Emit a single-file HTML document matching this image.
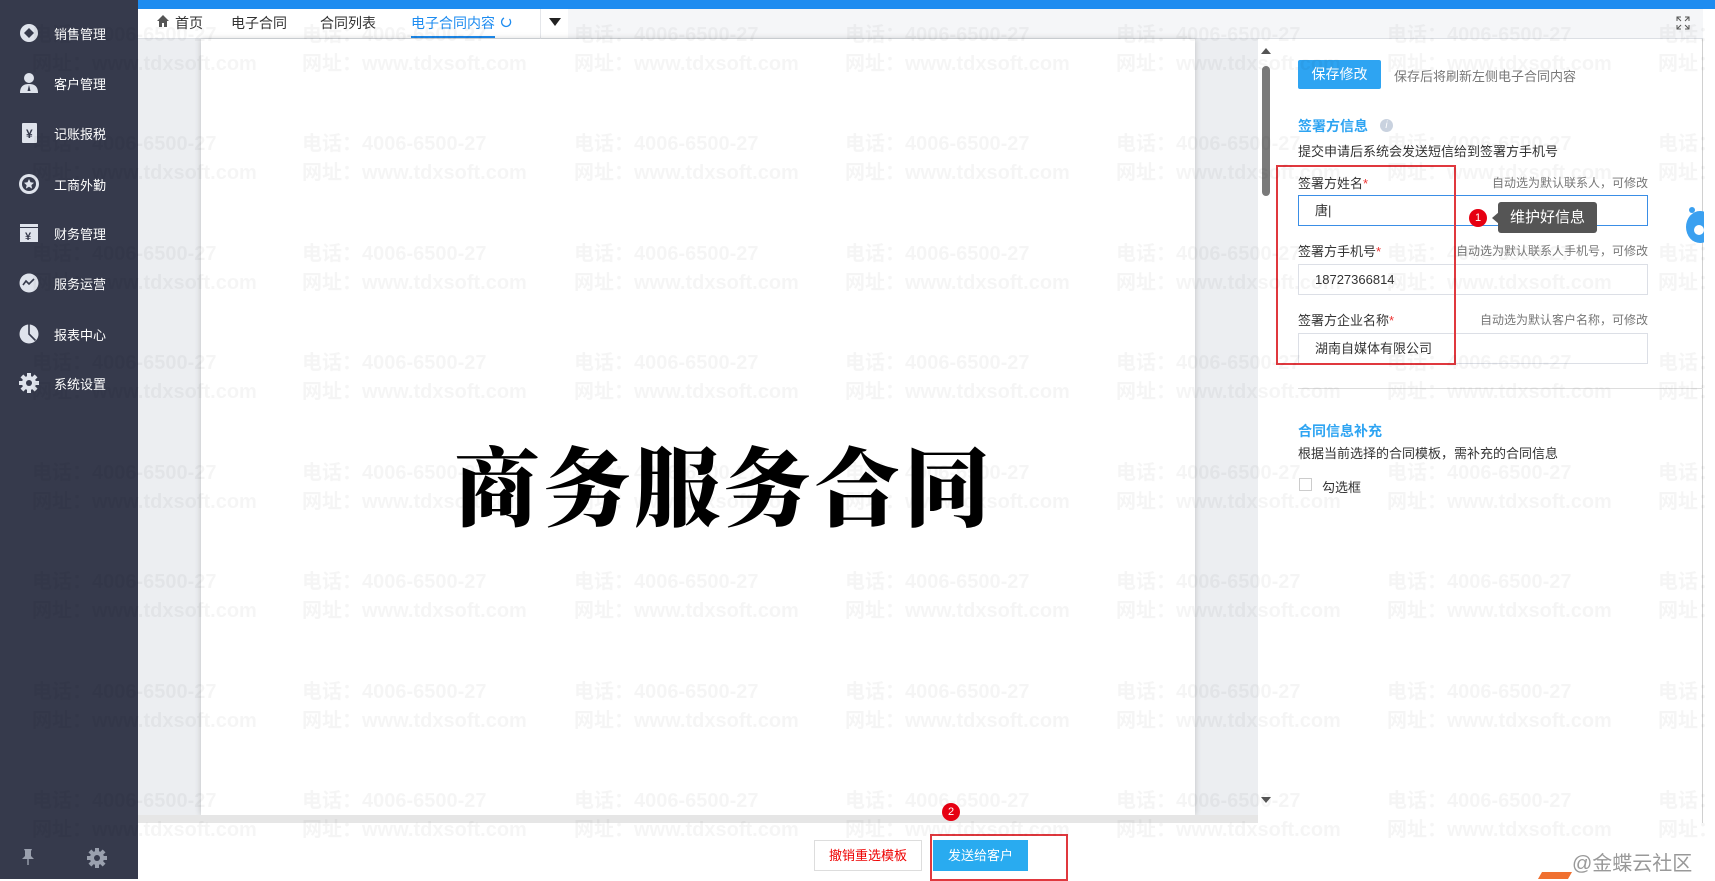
<!DOCTYPE html>
<html><head><meta charset="utf-8">
<style>
*{margin:0;padding:0;box-sizing:border-box}
body{width:1715px;height:879px;overflow:hidden;position:relative;background:#fff;font-family:"Liberation Sans","Noto Sans CJK SC",sans-serif;font-size:13px;color:#333}
.abs{position:absolute}
#side{left:0;top:0;width:138px;height:879px;background:#363a4c}
.mi{position:absolute;left:18px;height:24px;display:flex;align-items:center;color:#fff;font-size:13px}
.mi .ic{width:22px;height:22px;margin-right:14px;display:flex;align-items:center;justify-content:center}
#topbar{left:138px;top:0;width:1577px;height:9px;background:#1e8cf0}
#tabs{left:138px;top:9px;width:1565px;height:30px;background:#f5f6f8;border-bottom:1px solid #dcdfe4}
#tabw{left:138px;top:9px;width:430px;height:30px;background:#fff;border-bottom:1px solid #dcdfe4}
.tab{position:absolute;top:13px;font-size:14px;color:#333}
#content{left:138px;top:39px;width:1120px;height:784px;background:#eceef1}
#doc{left:201px;top:39px;width:994px;height:776px;background:#fff;box-shadow:0 0 6px rgba(0,0,0,.2)}
#hs{left:138px;top:815px;width:1120px;height:8px;background:#e6e6e6}
#panel{left:1258px;top:39px;width:445px;height:784px;background:#fff;border-right:1px solid #d0d0d0}
#bottom{left:138px;top:823px;width:1577px;height:56px;background:#fff}
.lbl{position:absolute;font-size:13px;color:#333}
.hint{position:absolute;font-size:12px;color:#777;text-align:right;right:67px}
.inp{position:absolute;left:1298px;width:350px;height:31px;border:1px solid #dcdfe6;background:#fff;font-size:13px;padding-left:16px;line-height:29px}
.req{color:#e33}
.wm{position:absolute;font-weight:bold;font-size:20px;color:rgba(0,0,0,.04);white-space:nowrap;line-height:29px;pointer-events:none}
.badge{position:absolute;width:18px;height:18px;border-radius:50%;background:#e60012;color:#fff;font-size:11px;text-align:center;line-height:18px}
</style></head><body>

<div id="side" class="abs">
  <div class="mi" style="top:21px"><div class="ic"><svg width="20" height="20"><circle cx="10" cy="10" r="9" fill="#dfe3ec"/><path d="M10 5l5 5-5 5-5-5z" fill="#363a4c"/></svg></div>销售管理</div>
  <div class="mi" style="top:71px"><div class="ic"><svg width="20" height="22"><circle cx="10" cy="6" r="5" fill="#dfe3ec"/><path d="M1 21c0-7 4-9 9-9s9 2 9 9z" fill="#dfe3ec"/><path d="M10 13l-1.5 6h3z" fill="#363a4c"/></svg></div>客户管理</div>
  <div class="mi" style="top:121px"><div class="ic"><svg width="20" height="22"><rect x="3" y="1" width="15" height="20" rx="1" fill="#dfe3ec"/><text x="7" y="16" font-size="12" font-weight="bold" fill="#363a4c">¥</text></svg></div>记账报税</div>
  <div class="mi" style="top:172px"><div class="ic"><svg width="22" height="22"><circle cx="11" cy="11" r="10" fill="#dfe3ec"/><circle cx="11" cy="11" r="7" fill="#363a4c"/><path d="M11 6l1.5 3.3 3.5.4-2.6 2.4.7 3.5-3.1-1.8-3.1 1.8.7-3.5L6 9.7l3.5-.4z" fill="#dfe3ec"/></svg></div>工商外勤</div>
  <div class="mi" style="top:221px"><div class="ic"><svg width="20" height="20"><rect x="1" y="1" width="18" height="3" fill="#dfe3ec"/><rect x="1" y="5" width="18" height="14" fill="#dfe3ec"/><text x="6" y="17" font-size="11" font-weight="bold" fill="#363a4c">¥</text></svg></div>财务管理</div>
  <div class="mi" style="top:271px"><div class="ic"><svg width="20" height="20"><circle cx="10" cy="10" r="9.5" fill="#dfe3ec"/><path d="M4 12l3-4 3 3 5-5" stroke="#363a4c" stroke-width="1.6" fill="none"/></svg></div>服务运营</div>
  <div class="mi" style="top:322px"><div class="ic"><svg width="20" height="20"><circle cx="10" cy="10" r="9.5" fill="#dfe3ec"/><path d="M10 0.5V10l6.5 6.5" stroke="#363a4c" stroke-width="1.6" fill="none"/></svg></div>报表中心</div>
  <div class="mi" style="top:371px"><div class="ic"><svg width="20" height="20" viewBox="0 0 20 20"><g fill="#dfe3ec"><circle cx="10" cy="10" r="7"/><rect x="8" y="0" width="4" height="20"/><rect x="0" y="8" width="20" height="4"/><rect x="8" y="0" width="4" height="20" transform="rotate(45 10 10)"/><rect x="8" y="0" width="4" height="20" transform="rotate(-45 10 10)"/></g><circle cx="10" cy="10" r="3" fill="#363a4c"/></svg></div>系统设置</div>
  <svg class="abs" style="left:20px;top:848px" width="16" height="18"><path d="M4 1h8l-1 2v5l3 3H2l3-3V3z M7.3 11h1.4v6H7.3z" fill="#9aa0ae"/></svg>
  <svg class="abs" style="left:87px;top:848px" width="20" height="20" viewBox="0 0 20 20"><g fill="#9aa0ae"><circle cx="10" cy="10" r="7"/><rect x="8" y="0" width="4" height="20"/><rect x="0" y="8" width="20" height="4"/><rect x="8" y="0" width="4" height="20" transform="rotate(45 10 10)"/><rect x="8" y="0" width="4" height="20" transform="rotate(-45 10 10)"/></g><circle cx="10" cy="10" r="3" fill="#363a4c"/></svg>
</div>

<div id="topbar" class="abs"></div>
<div id="tabs" class="abs"></div>
<div id="tabw" class="abs"></div>
<svg class="abs" style="left:156px;top:14px" width="14" height="14"><path d="M7 1L1 7h2v6h3V9h2v4h3V7h2z" fill="#555"/></svg>
<div class="tab" style="left:175px">首页</div>
<div class="tab" style="left:231px">电子合同</div>
<div class="tab" style="left:320px">合同列表</div>
<div class="tab" style="left:411px;color:#1e8cf0">电子合同内容</div>
<div class="abs" style="left:411px;top:36px;width:84px;height:2px;background:#1e8cf0"></div>
<svg class="abs" style="left:500px;top:16px" width="12" height="12"><path d="M9.5 3A4.5 4.5 0 1 1 4 2" stroke="#1e8cf0" stroke-width="1.3" fill="none"/></svg>
<div class="abs" style="left:540px;top:9px;width:1px;height:30px;background:#e4e6ea"></div>
<svg class="abs" style="left:549px;top:18px" width="12" height="8"><path d="M0 0h12L6 8z" fill="#222"/></svg>
<svg class="abs" style="left:1676px;top:16px" width="14" height="14"><path d="M1 5V1h4M9 1h4v4M13 9v4H9M5 13H1V9M1 1l4 4M13 1L9 5M13 13L9 9M1 13l4-4" stroke="#555" fill="none"/></svg>

<div id="content" class="abs"></div>
<div id="doc" class="abs"></div>
<div class="abs" style="left:454px;top:432px;font-family:'Noto Serif CJK SC',serif;font-weight:900;font-size:86px;letter-spacing:4px;color:#000;line-height:100px;white-space:nowrap">商务服务合同</div>
<div id="hs" class="abs"></div>

<div id="panel" class="abs"></div>
<div class="abs" style="left:1262px;top:66px;width:8px;height:130px;background:#7a7a7a;border-radius:4px"></div>
<svg class="abs" style="left:1261px;top:48px" width="10" height="6"><path d="M0 6L5 0l5 6z" fill="#555"/></svg>
<svg class="abs" style="left:1261px;top:797px" width="10" height="6"><path d="M0 0h10L5 6z" fill="#555"/></svg>

<div class="abs" style="left:1298px;top:60px;width:83px;height:29px;background:#2ea4f2;border-radius:2px;color:#fff;font-size:14px;text-align:center;line-height:29px">保存修改</div>
<div class="lbl" style="left:1394px;top:66px;color:#777;font-size:13px">保存后将刷新左侧电子合同内容</div>
<div class="lbl" style="left:1298px;top:116px;color:#2ea4f2;font-size:14px;font-weight:bold">签署方信息</div>
<div class="abs" style="left:1380px;top:119px;width:13px;height:13px;border-radius:50%;background:#c9d2df;color:#fff;font-size:10px;text-align:center;line-height:13px;font-style:italic">i</div>
<div class="lbl" style="left:1298px;top:141px">提交申请后系统会发送短信给到签署方手机号</div>

<div class="lbl" style="left:1298px;top:173px">签署方姓名<span class="req">*</span></div>
<div class="hint" style="top:174px">自动选为默认联系人，可修改</div>
<div class="inp" style="top:195px;border-color:#3a8ee6">唐|</div>
<div class="lbl" style="left:1298px;top:241px">签署方手机号<span class="req">*</span></div>
<div class="hint" style="top:242px">自动选为默认联系人手机号，可修改</div>
<div class="inp" style="top:264px">18727366814</div>
<div class="lbl" style="left:1298px;top:310px">签署方企业名称<span class="req">*</span></div>
<div class="hint" style="top:311px">自动选为默认客户名称，可修改</div>
<div class="inp" style="top:333px">湖南自媒体有限公司</div>
<div class="abs" style="left:1276px;top:165px;width:180px;height:200px;border:2px solid #e0383e"></div>
<div class="badge" style="left:1469px;top:209px">1</div>
<svg class="abs" style="left:1492px;top:212px" width="7" height="12"><path d="M7 0v12L0 6z" fill="#555"/></svg>
<div class="abs" style="left:1498px;top:202px;width:99px;height:31px;background:#555;border-radius:3px;color:#fff;font-size:15px;line-height:31px;text-align:center">维护好信息</div>
<svg class="abs" style="left:1682px;top:205px" width="22" height="40"><ellipse cx="18" cy="22" rx="14" ry="16" fill="#3aa0f0"/><circle cx="17" cy="25" r="5" fill="#fff"/><circle cx="10" cy="5" r="3" fill="#3aa0f0"/></svg>
<div class="abs" style="left:1298px;top:388px;width:405px;height:1px;background:#ddd"></div>
<div class="lbl" style="left:1298px;top:421px;color:#2ea4f2;font-size:14px;font-weight:bold">合同信息补充</div>
<div class="lbl" style="left:1298px;top:443px">根据当前选择的合同模板，需补充的合同信息</div>
<div class="abs" style="left:1299px;top:478px;width:13px;height:13px;border:1px solid #ccc;background:#fff"></div>
<div class="lbl" style="left:1322px;top:477px">勾选框</div>

<div id="bottom" class="abs"></div>
<div class="abs" style="left:814px;top:840px;width:108px;height:31px;border:1px solid #ddd;background:#fff;color:#e00;font-size:13px;text-align:center;line-height:29px">撤销重选模板</div>
<div class="abs" style="left:933px;top:840px;width:95px;height:31px;background:#29abf0;color:#fff;font-size:13px;text-align:center;line-height:31px">发送给客户</div>
<div class="abs" style="left:930px;top:834px;width:138px;height:47px;border:2px solid #e0383e"></div>
<div class="badge" style="left:942px;top:803px">2</div>
<div class="abs" style="left:1572px;top:847px;font-size:20px;color:#999">@金蝶云社区</div>
<div class="abs" style="left:1540px;top:872px;width:30px;height:7px;background:#f07030;transform:skewX(-30deg)"></div>

<div style="position:absolute;left:0;top:0;width:1715px;height:879px;pointer-events:none">
<div class="wm" style="left:32px;top:21px">电话：4006-6500-27<br>网址：www.tdxsoft.com</div>
<div class="wm" style="left:302px;top:21px">电话：4006-6500-27<br>网址：www.tdxsoft.com</div>
<div class="wm" style="left:574px;top:21px">电话：4006-6500-27<br>网址：www.tdxsoft.com</div>
<div class="wm" style="left:845px;top:21px">电话：4006-6500-27<br>网址：www.tdxsoft.com</div>
<div class="wm" style="left:1116px;top:21px">电话：4006-6500-27<br>网址：www.tdxsoft.com</div>
<div class="wm" style="left:1387px;top:21px">电话：4006-6500-27<br>网址：www.tdxsoft.com</div>
<div class="wm" style="left:1658px;top:21px">电话：4006-6500-27<br>网址：www.tdxsoft.com</div>
<div class="wm" style="left:32px;top:130px">电话：4006-6500-27<br>网址：www.tdxsoft.com</div>
<div class="wm" style="left:302px;top:130px">电话：4006-6500-27<br>网址：www.tdxsoft.com</div>
<div class="wm" style="left:574px;top:130px">电话：4006-6500-27<br>网址：www.tdxsoft.com</div>
<div class="wm" style="left:845px;top:130px">电话：4006-6500-27<br>网址：www.tdxsoft.com</div>
<div class="wm" style="left:1116px;top:130px">电话：4006-6500-27<br>网址：www.tdxsoft.com</div>
<div class="wm" style="left:1387px;top:130px">电话：4006-6500-27<br>网址：www.tdxsoft.com</div>
<div class="wm" style="left:1658px;top:130px">电话：4006-6500-27<br>网址：www.tdxsoft.com</div>
<div class="wm" style="left:32px;top:240px">电话：4006-6500-27<br>网址：www.tdxsoft.com</div>
<div class="wm" style="left:302px;top:240px">电话：4006-6500-27<br>网址：www.tdxsoft.com</div>
<div class="wm" style="left:574px;top:240px">电话：4006-6500-27<br>网址：www.tdxsoft.com</div>
<div class="wm" style="left:845px;top:240px">电话：4006-6500-27<br>网址：www.tdxsoft.com</div>
<div class="wm" style="left:1116px;top:240px">电话：4006-6500-27<br>网址：www.tdxsoft.com</div>
<div class="wm" style="left:1387px;top:240px">电话：4006-6500-27<br>网址：www.tdxsoft.com</div>
<div class="wm" style="left:1658px;top:240px">电话：4006-6500-27<br>网址：www.tdxsoft.com</div>
<div class="wm" style="left:32px;top:349px">电话：4006-6500-27<br>网址：www.tdxsoft.com</div>
<div class="wm" style="left:302px;top:349px">电话：4006-6500-27<br>网址：www.tdxsoft.com</div>
<div class="wm" style="left:574px;top:349px">电话：4006-6500-27<br>网址：www.tdxsoft.com</div>
<div class="wm" style="left:845px;top:349px">电话：4006-6500-27<br>网址：www.tdxsoft.com</div>
<div class="wm" style="left:1116px;top:349px">电话：4006-6500-27<br>网址：www.tdxsoft.com</div>
<div class="wm" style="left:1387px;top:349px">电话：4006-6500-27<br>网址：www.tdxsoft.com</div>
<div class="wm" style="left:1658px;top:349px">电话：4006-6500-27<br>网址：www.tdxsoft.com</div>
<div class="wm" style="left:32px;top:459px">电话：4006-6500-27<br>网址：www.tdxsoft.com</div>
<div class="wm" style="left:302px;top:459px">电话：4006-6500-27<br>网址：www.tdxsoft.com</div>
<div class="wm" style="left:574px;top:459px">电话：4006-6500-27<br>网址：www.tdxsoft.com</div>
<div class="wm" style="left:845px;top:459px">电话：4006-6500-27<br>网址：www.tdxsoft.com</div>
<div class="wm" style="left:1116px;top:459px">电话：4006-6500-27<br>网址：www.tdxsoft.com</div>
<div class="wm" style="left:1387px;top:459px">电话：4006-6500-27<br>网址：www.tdxsoft.com</div>
<div class="wm" style="left:1658px;top:459px">电话：4006-6500-27<br>网址：www.tdxsoft.com</div>
<div class="wm" style="left:32px;top:568px">电话：4006-6500-27<br>网址：www.tdxsoft.com</div>
<div class="wm" style="left:302px;top:568px">电话：4006-6500-27<br>网址：www.tdxsoft.com</div>
<div class="wm" style="left:574px;top:568px">电话：4006-6500-27<br>网址：www.tdxsoft.com</div>
<div class="wm" style="left:845px;top:568px">电话：4006-6500-27<br>网址：www.tdxsoft.com</div>
<div class="wm" style="left:1116px;top:568px">电话：4006-6500-27<br>网址：www.tdxsoft.com</div>
<div class="wm" style="left:1387px;top:568px">电话：4006-6500-27<br>网址：www.tdxsoft.com</div>
<div class="wm" style="left:1658px;top:568px">电话：4006-6500-27<br>网址：www.tdxsoft.com</div>
<div class="wm" style="left:32px;top:678px">电话：4006-6500-27<br>网址：www.tdxsoft.com</div>
<div class="wm" style="left:302px;top:678px">电话：4006-6500-27<br>网址：www.tdxsoft.com</div>
<div class="wm" style="left:574px;top:678px">电话：4006-6500-27<br>网址：www.tdxsoft.com</div>
<div class="wm" style="left:845px;top:678px">电话：4006-6500-27<br>网址：www.tdxsoft.com</div>
<div class="wm" style="left:1116px;top:678px">电话：4006-6500-27<br>网址：www.tdxsoft.com</div>
<div class="wm" style="left:1387px;top:678px">电话：4006-6500-27<br>网址：www.tdxsoft.com</div>
<div class="wm" style="left:1658px;top:678px">电话：4006-6500-27<br>网址：www.tdxsoft.com</div>
<div class="wm" style="left:32px;top:787px">电话：4006-6500-27<br>网址：www.tdxsoft.com</div>
<div class="wm" style="left:302px;top:787px">电话：4006-6500-27<br>网址：www.tdxsoft.com</div>
<div class="wm" style="left:574px;top:787px">电话：4006-6500-27<br>网址：www.tdxsoft.com</div>
<div class="wm" style="left:845px;top:787px">电话：4006-6500-27<br>网址：www.tdxsoft.com</div>
<div class="wm" style="left:1116px;top:787px">电话：4006-6500-27<br>网址：www.tdxsoft.com</div>
<div class="wm" style="left:1387px;top:787px">电话：4006-6500-27<br>网址：www.tdxsoft.com</div>
<div class="wm" style="left:1658px;top:787px">电话：4006-6500-27<br>网址：www.tdxsoft.com</div>
</div>
</body></html>
